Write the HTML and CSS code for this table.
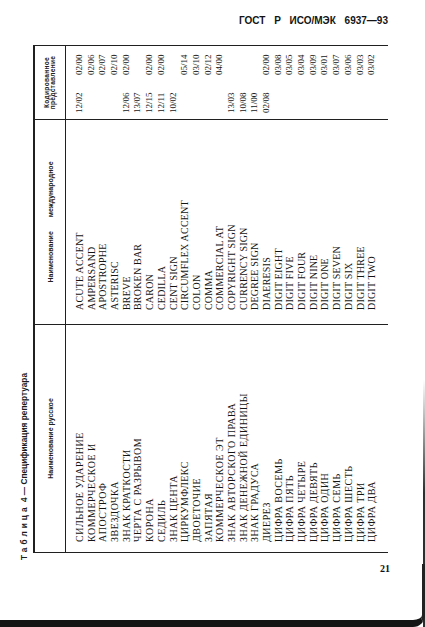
FILE: index.html
```html
<!DOCTYPE html>
<html lang="ru">
<head>
<meta charset="utf-8">
<title>ГОСТ Р ИСО/МЭК 6937—93 — Таблица 4</title>
<link rel="stylesheet" href="styles.css">
</head>
<body>
<div class="page">
  <header class="doc-head">ГОСТ Р ИСО/МЭК 6937—93</header>
  <div class="sheet-wrap">
    <div class="sheet">
      <div class="caption"><span class="caption-label">Таблица</span> 4 — Спецификация репертуара</div>
      <div class="tbl">
        <div class="thead">
          <div class="th">Наименование русское</div>
          <div class="th th-wide">Наименование международное</div>
          <div class="th th-code">Кодированное<br>представление</div>
        </div>
        <div class="tbody">
          <div class="tr"><div class="td ru">СИЛЬНОЕ УДАРЕНИЕ</div><div class="td en">ACUTE ACCENT</div><div class="td code"><span class="c1">12/02</span><span class="c2">02/00</span></div></div>
          <div class="tr"><div class="td ru">КОММЕРЧЕСКОЕ И</div><div class="td en">AMPERSAND</div><div class="td code"><span class="c1"></span><span class="c2">02/06</span></div></div>
          <div class="tr"><div class="td ru">АПОСТРОФ</div><div class="td en">APOSTROPHE</div><div class="td code"><span class="c1"></span><span class="c2">02/07</span></div></div>
          <div class="tr"><div class="td ru">ЗВЕЗДОЧКА</div><div class="td en">ASTERISC</div><div class="td code"><span class="c1"></span><span class="c2">02/10</span></div></div>
          <div class="tr"><div class="td ru">ЗНАК КРАТКОСТИ</div><div class="td en">BREVE</div><div class="td code"><span class="c1">12/06</span><span class="c2">02/00</span></div></div>
          <div class="tr"><div class="td ru">ЧЕРТА С РАЗРЫВОМ</div><div class="td en">BROKEN BAR</div><div class="td code"><span class="c1">13/07</span><span class="c2"></span></div></div>
          <div class="tr"><div class="td ru">КОРОНА</div><div class="td en">CARON</div><div class="td code"><span class="c1">12/15</span><span class="c2">02/00</span></div></div>
          <div class="tr"><div class="td ru">СЕДИЛЬ</div><div class="td en">CEDILLA</div><div class="td code"><span class="c1">12/11</span><span class="c2">02/00</span></div></div>
          <div class="tr"><div class="td ru">ЗНАК ЦЕНТА</div><div class="td en">CENT SIGN</div><div class="td code"><span class="c1">10/02</span><span class="c2"></span></div></div>
          <div class="tr"><div class="td ru">ЦИРКУМФЛЕКС</div><div class="td en">CIRCUMFLEX ACCENT</div><div class="td code"><span class="c1"></span><span class="c2">05/14</span></div></div>
          <div class="tr"><div class="td ru">ДВОЕТОЧИЕ</div><div class="td en">COLON</div><div class="td code"><span class="c1"></span><span class="c2">03/10</span></div></div>
          <div class="tr"><div class="td ru">ЗАПЯТАЯ</div><div class="td en">COMMA</div><div class="td code"><span class="c1"></span><span class="c2">02/12</span></div></div>
          <div class="tr"><div class="td ru">КОММЕРЧЕСКОЕ ЭТ</div><div class="td en">COMMERCIAL AT</div><div class="td code"><span class="c1"></span><span class="c2">04/00</span></div></div>
          <div class="tr"><div class="td ru">ЗНАК АВТОРСКОГО ПРАВА</div><div class="td en">COPYRIGHT SIGN</div><div class="td code"><span class="c1">13/03</span><span class="c2"></span></div></div>
          <div class="tr"><div class="td ru">ЗНАК ДЕНЕЖНОЙ ЕДИНИЦЫ</div><div class="td en">CURRENCY SIGN</div><div class="td code"><span class="c1">10/08</span><span class="c2"></span></div></div>
          <div class="tr"><div class="td ru">ЗНАК ГРАДУСА</div><div class="td en">DEGREE SIGN</div><div class="td code"><span class="c1">11/00</span><span class="c2"></span></div></div>
          <div class="tr"><div class="td ru">ДИЕРЕЗ</div><div class="td en">DIAERESIS</div><div class="td code"><span class="c1">02/08</span><span class="c2">02/00</span></div></div>
          <div class="tr"><div class="td ru">ЦИФРА ВОСЕМЬ</div><div class="td en">DIGIT EIGHT</div><div class="td code"><span class="c1"></span><span class="c2">03/08</span></div></div>
          <div class="tr"><div class="td ru">ЦИФРА ПЯТЬ</div><div class="td en">DIGIT FIVE</div><div class="td code"><span class="c1"></span><span class="c2">03/05</span></div></div>
          <div class="tr"><div class="td ru">ЦИФРА ЧЕТЫРЕ</div><div class="td en">DIGIT FOUR</div><div class="td code"><span class="c1"></span><span class="c2">03/04</span></div></div>
          <div class="tr"><div class="td ru">ЦИФРА ДЕВЯТЬ</div><div class="td en">DIGIT NINE</div><div class="td code"><span class="c1"></span><span class="c2">03/09</span></div></div>
          <div class="tr"><div class="td ru">ЦИФРА ОДИН</div><div class="td en">DIGIT ONE</div><div class="td code"><span class="c1"></span><span class="c2">03/01</span></div></div>
          <div class="tr"><div class="td ru">ЦИФРА СЕМЬ</div><div class="td en">DIGIT SEVEN</div><div class="td code"><span class="c1"></span><span class="c2">03/07</span></div></div>
          <div class="tr"><div class="td ru">ЦИФРА ШЕСТЬ</div><div class="td en">DIGIT SIX</div><div class="td code"><span class="c1"></span><span class="c2">03/06</span></div></div>
          <div class="tr"><div class="td ru">ЦИФРА ТРИ</div><div class="td en">DIGIT THREE</div><div class="td code"><span class="c1"></span><span class="c2">03/03</span></div></div>
          <div class="tr"><div class="td ru">ЦИФРА ДВА</div><div class="td en">DIGIT TWO</div><div class="td code"><span class="c1"></span><span class="c2">03/02</span></div></div>
        </div>
      </div>
    </div>
  </div>
  <footer class="doc-foot"><span class="page-no">21</span></footer>
</div>
</body>
</html>
```

FILE: styles.css
```css
* {
  box-sizing: border-box;
}

html,
body {
  margin: 0;
  padding: 0;
  background: #ffffff;
}

body {
  overflow: hidden;
}

.page {
  width: 425px;
  height: 627px;
  display: flex;
  flex-direction: column;
  overflow: hidden;
  color: #141414;
  background:
    linear-gradient(to bottom, rgba(50, 50, 50, 0), #2e2e2e 45%) right 0 top 380px / 2px 250px no-repeat,
    #ffffff;
}

/* running head */
.doc-head {
  flex: none;
  height: 44px;
  padding: 15px 37px 0 0;
  text-align: right;
  font-family: "Liberation Sans", Arial, sans-serif;
  font-weight: bold;
  font-size: 10px;
  line-height: 12px;
  word-spacing: 6px;
  color: #141414;
}

/* rotated landscape table */
.sheet-wrap {
  flex: none;
  width: 374px;
  height: 522px;
  margin-left: 14px;
}

.sheet {
  width: 522px;
  height: 374px;
  display: flex;
  flex-direction: column;
  transform-origin: 0 0;
  transform: translate(0, 522px) rotate(-90deg);
}

.caption {
  flex: none;
  height: 19px;
  padding: 2px 0 0 6px;
  font-family: "Liberation Sans", Arial, sans-serif;
  font-weight: bold;
  font-size: 8.3px;
  line-height: 16px;
  white-space: nowrap;
  color: #1c1c1c;
}

.caption-label {
  letter-spacing: 3px;
}

.tbl {
  flex: none;
  width: 508px;
  height: 355px;
  margin-left: 13px;
  border: 1px solid #202020;
  border-top-width: 2px;
  border-bottom: 0;
  display: flex;
  flex-direction: column;
}

.thead,
.tr {
  display: grid;
  grid-template-columns: 228px 205px 73px;
}

.thead {
  flex: none;
  height: 31px;
  border-bottom: 1px solid #202020;
}

.th {
  display: flex;
  align-items: center;
  justify-content: center;
  text-align: center;
  font-family: "Liberation Sans", Arial, sans-serif;
  font-weight: bold;
  font-size: 7px;
  line-height: 7px;
  border-right: 1px solid #202020;
  color: #222;
}

.th-wide {
  word-spacing: 12px;
}

.th-code {
  border-right: 0;
  font-size: 6.6px;
  line-height: 6px;
  letter-spacing: 0.3px;
}

.tbody {
  flex: 1;
  display: flex;
  flex-direction: column;
}

.tr {
  flex: none;
}

.tr:last-child {
  flex: 1;
}

.tr:first-child .td {
  padding-top: 8px;
}

.td {
  font-family: "Liberation Serif", "Times New Roman", serif;
  font-size: 10px;
  line-height: 11.68px;
  white-space: nowrap;
  border-right: 1px solid #202020;
  color: #141414;
}

.ru {
  padding-left: 10px;
  letter-spacing: 0.5px;
}

.en {
  padding-left: 14px;
  letter-spacing: 0.2px;
}

.code {
  display: flex;
  border-right: 0;
  padding-left: 6px;
  font-size: 9px;
}

.c1 {
  flex: none;
  width: 38px;
}

/* page foot with scan edge */
.doc-foot {
  flex: 1;
  margin-top: -2px;
  padding-right: 32px;
  text-align: right;
  border-right: 3px solid #222;
  border-bottom: 7px solid #141414;
  border-bottom-right-radius: 12px;
  font-family: "Liberation Serif", "Times New Roman", serif;
  font-size: 10px;
  line-height: 10px;
}

.page-no {
  color: #111;
  font-weight: bold;
}
```
